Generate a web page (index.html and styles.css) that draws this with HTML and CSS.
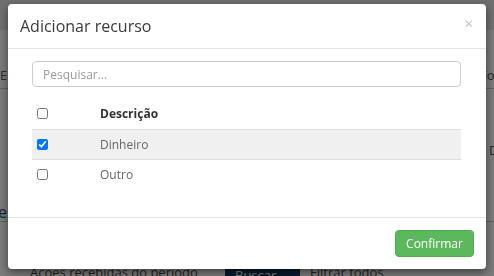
FILE: index.html
```html
<!DOCTYPE html>
<html lang="pt">
<head>
<meta charset="utf-8">
<title>Adicionar recurso</title>
<link rel="stylesheet" href="styles.css">
</head>
<body>
<div class="page">
  <div class="topbar"></div>
  <div class="bg-row bg-row-a"><span class="bg-l">Empresa</span><span class="bg-r">Fornecer</span></div>
  <div class="bg-sep"></div>
  <div class="bg-row bg-row-b"><span class="bg-l"></span><span class="bg-r">Descrição</span></div>
  <div class="bg-row bg-row-c"><span class="bg-l bg-blue">Despesas</span><span class="bg-r"></span></div>
  <div class="bg-sep"></div>
  <div class="bg-bottom">
    <span class="bg-text">Ações recebidas do período</span>
    <span class="bg-navy">Buscar</span>
    <span class="bg-text">Filtrar todos</span>
  </div>
</div>

<div class="backdrop"></div>

<div class="modal">
  <div class="modal-header">
    <h4 class="modal-title">Adicionar recurso</h4>
    <span class="close">×</span>
  </div>
  <div class="modal-body">
    <input class="search" type="text" placeholder="Pesquisar...">
    <table class="tbl">
      <thead>
        <tr><th class="c-check"><input type="checkbox"></th><th>Descrição</th></tr>
      </thead>
      <tbody>
        <tr class="sel"><td class="c-check"><input type="checkbox" checked></td><td>Dinheiro</td></tr>
        <tr><td class="c-check"><input type="checkbox"></td><td>Outro</td></tr>
      </tbody>
    </table>
  </div>
  <div class="modal-footer">
    <button class="btn-confirm">Confirmar</button>
  </div>
</div>
</body>
</html>
```
FILE: styles.css
```css
* { box-sizing: border-box; }
html, body { margin: 0; padding: 0; }
body {
  width: 494px;
  height: 276px;
  overflow: hidden;
  font-family: "Open Sans", "Liberation Sans", sans-serif;
  background: #fff;
  color: #333;
}
.page { display: flex; flex-direction: column; }
.topbar { height: 30px; background: #e8e8e8; }
.bg-row { display: flex; justify-content: space-between; font-size: 13px; color: #555; white-space: nowrap; overflow: hidden; }
.bg-row-a { margin-top: 36px; height: 22px; }
.bg-row-a .bg-r { margin-right: -40px; }
.bg-sep { height: 1px; background: #ccc; }
.bg-row-b { margin-top: 52px; height: 20px; }
.bg-row-b .bg-r { margin-right: -54px; }
.bg-row-c { margin-top: 40px; height: 20px; font-size: 16px; }
.bg-row-c .bg-l { margin-left: -40px; }
.bg-blue { color: #1f4e79; }
.bg-bottom { margin-top: 41px; display: flex; align-items: flex-start; gap: 10px; font-size: 13px; color: #444; white-space: nowrap; }
.bg-bottom .bg-text:first-child { margin-left: 30px; width: 185px; overflow: hidden; }
.bg-navy { background: #14375a; color: #fff; width: 75px; padding: 3px 10px; height: 24px; }

.backdrop { position: fixed; inset: 0; background: rgba(0,0,0,0.52); }

.modal {
  position: fixed;
  left: 8px;
  top: 4px;
  width: 478px;
  height: 265px;
  background: #fff;
  border-radius: 4px;
  box-shadow: 0 3px 9px rgba(0,0,0,0.5);
  display: flex;
  flex-direction: column;
}
.modal-header {
  display: flex;
  justify-content: space-between;
  align-items: center;
  height: 45px;
  padding: 0 13px 0 12px;
  border-bottom: 1px solid #e5e5e5;
}
.modal-title { margin: 0; font-size: 16px; font-weight: 400; color: #3a3a3a; line-height: 20px; }
.close { font-size: 15px; color: #bdbdbd; line-height: 1; margin-top: -6px; }

.modal-body { flex: 1; padding: 12px 25px 0 24px; }
.search {
  display: block;
  width: 100%;
  height: 26px;
  border: 1px solid #ccc;
  border-radius: 4px;
  padding: 0 10px;
  font-family: inherit;
  font-size: 12px;
  color: #555;
  outline: none;
}
.search::placeholder { color: #999; }

.tbl { width: 100%; border-collapse: collapse; margin-top: 12px; font-size: 12px; }
.tbl th, .tbl td { text-align: left; height: 30px; padding: 0; vertical-align: middle; }
.tbl th { font-weight: 700; color: #333; }
.tbl td { color: #666; border-top: 1px solid #ddd; }
.tbl .c-check { width: 68px; padding-left: 5px; }
.tbl tr.sel td { background: #f0f0f0; }
.tbl input[type=checkbox] { margin: 0; width: 11px; height: 11px; display: block; }

.modal-footer {
  display: flex;
  justify-content: flex-end;
  align-items: center;
  height: 52px;
  padding: 0 12px;
  border-top: 1px solid #e5e5e5;
}
.btn-confirm {
  height: 27px;
  width: 79px;
  background: #5cb85c;
  border: 1px solid #4cae4c;
  border-radius: 4px;
  color: #fff;
  font-family: inherit;
  font-size: 12px;
  padding: 0;
}
```
